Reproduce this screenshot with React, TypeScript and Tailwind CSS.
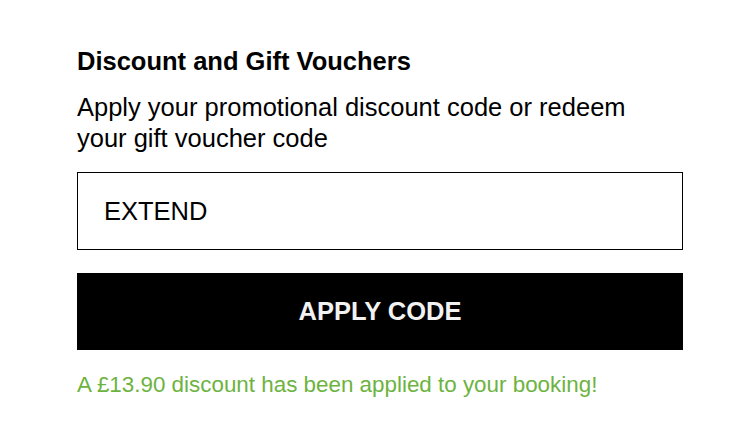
export default function App() {
  return (
    <div className="min-h-screen bg-white font-['Liberation_Sans',Arial,sans-serif] text-black">
      <div className="w-[606px] ml-[77px] pt-[45px]">
        <h2 className="text-[25.5px] font-bold leading-[32px]">Discount and Gift Vouchers</h2>
        <p className="mt-[15px] max-w-[590px] text-[25.5px] leading-[31px]">
          Apply your promotional discount code or redeem your gift voucher code
        </p>
        <div className="mt-[18px] h-[78px] border border-black flex items-center px-[26px]">
          <span className="text-[25.5px]">EXTEND</span>
        </div>
        <button className="mt-[23px] w-full h-[77px] bg-black text-[#f2f2f2] text-[25.5px] font-bold">
          APPLY CODE
        </button>
        <p className="mt-[21px] text-[22.4px] leading-[28px] text-[#6db33f]">
          A £13.90 discount has been applied to your booking!
        </p>
      </div>
    </div>
  );
}
